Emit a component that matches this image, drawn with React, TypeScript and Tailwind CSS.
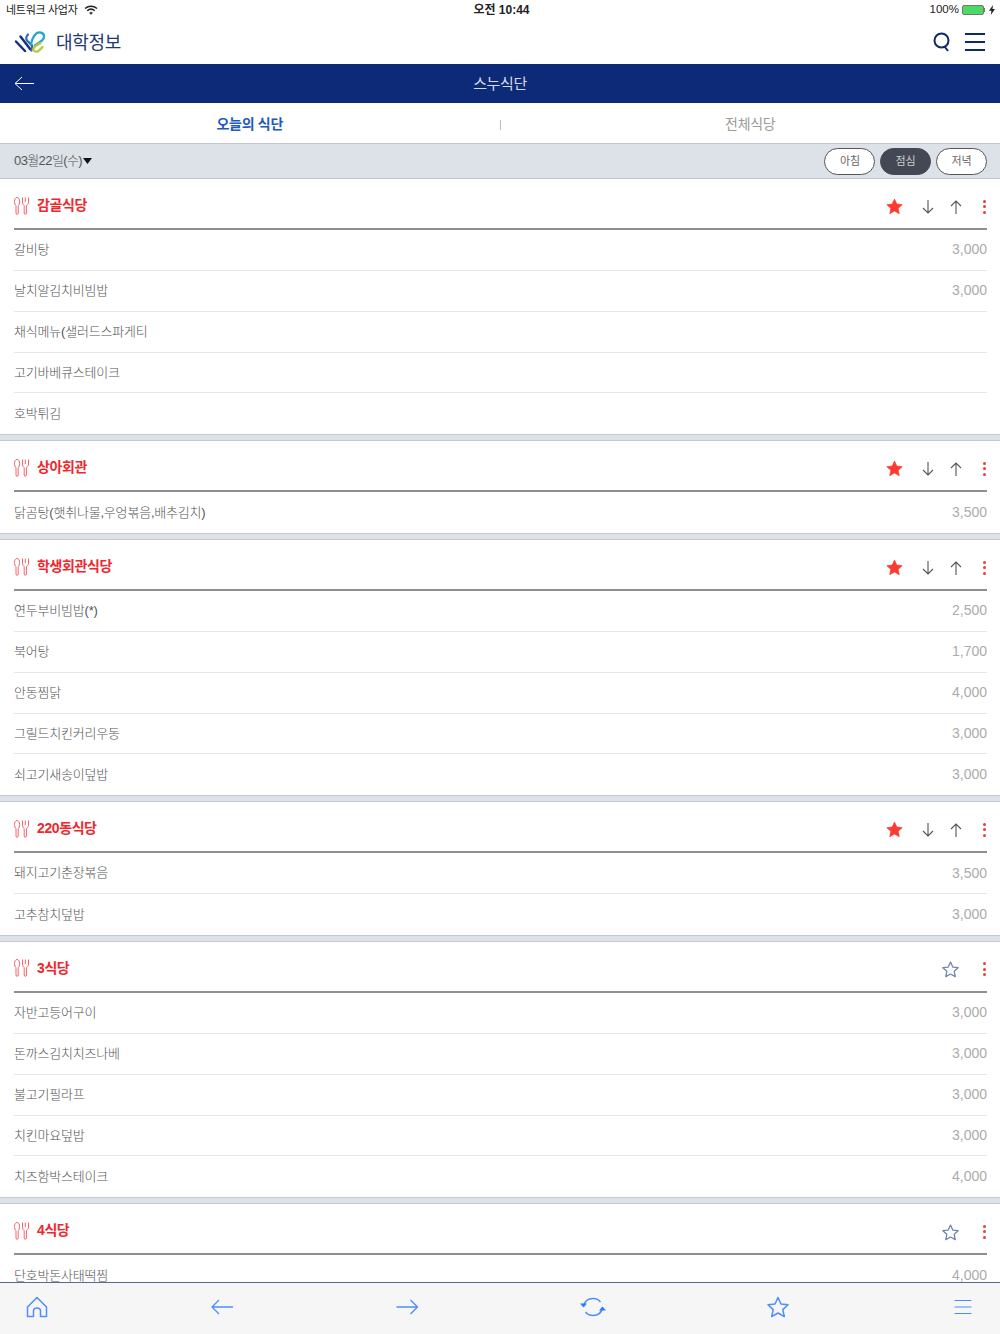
const font = "font-['Liberation_Sans','Noto_Sans_CJK_KR',sans-serif]";

type Menu = { name: string; price?: string };
type Cafeteria = { title: string; favorite: boolean; menus: Menu[] };

const cafeterias: Cafeteria[] = [
  {
    title: "감골식당",
    favorite: true,
    menus: [
      { name: "갈비탕", price: "3,000" },
      { name: "날치알김치비빔밥", price: "3,000" },
      { name: "채식메뉴(샐러드스파게티" },
      { name: "고기바베큐스테이크" },
      { name: "호박튀김" },
    ],
  },
  {
    title: "상아회관",
    favorite: true,
    menus: [{ name: "닭곰탕(햇취나물,우엉볶음,배추김치)", price: "3,500" }],
  },
  {
    title: "학생회관식당",
    favorite: true,
    menus: [
      { name: "연두부비빔밥(*)", price: "2,500" },
      { name: "북어탕", price: "1,700" },
      { name: "안동찜닭", price: "4,000" },
      { name: "그릴드치킨커리우동", price: "3,000" },
      { name: "쇠고기새송이덮밥", price: "3,000" },
    ],
  },
  {
    title: "220동식당",
    favorite: true,
    menus: [
      { name: "돼지고기춘장볶음", price: "3,500" },
      { name: "고추참치덮밥", price: "3,000" },
    ],
  },
  {
    title: "3식당",
    favorite: false,
    menus: [
      { name: "자반고등어구이", price: "3,000" },
      { name: "돈까스김치치즈나베", price: "3,000" },
      { name: "불고기필라프", price: "3,000" },
      { name: "치킨마요덮밥", price: "3,000" },
      { name: "치즈함박스테이크", price: "4,000" },
    ],
  },
  {
    title: "4식당",
    favorite: false,
    menus: [{ name: "단호박돈사태떡찜", price: "4,000" }],
  },
];

function Cutlery() {
  return (
    <svg width="15" height="18" viewBox="0 0 15 18" fill="none" stroke="#f4646a" strokeWidth="1">
      <path d="M3 .5C1.300 .5.500 2.500.500 4.500c0 2 .7 3.500 1.500 4V16c0 1.800 2.200 1.800 2.200 0V8.500c.8-.5 1.500-2 1.500-4C5.700 2.500 4.700 .5 3 .5Z" />
      <path d="M8.500.5V5c0 2 .8 3 1.700 3.500V16c0 1.800 2.200 1.800 2.200 0V8.500C13.300 8 14.500 7 14.500 5V.5M11.300.5V5" />
    </svg>
  );
}

function Star({ filled }: { filled: boolean }) {
  return (
    <svg width="17" height="17" viewBox="0 0 24 24" fill={filled ? "#fb3a32" : "none"} stroke={filled ? "#fb3a32" : "#6f86ab"} strokeWidth={filled ? 1 : 1.800} strokeLinejoin="round">
      <path d="m12 1.500 3.200 7 7.600.9-5.600 5.200 1.500 7.500-6.700-3.800-6.700 3.800 1.500-7.500L1.200 9.400l7.600-.9Z" />
    </svg>
  );
}

function Arrow({ up }: { up?: boolean }) {
  return (
    <svg width="12" height="14" viewBox="0 0 12 14" fill="none" stroke="#555" strokeWidth="1.100">
      {up ? <path d="M6 14V1M1 6l5-5 5 5" /> : <path d="M6 0v13M1 8l5 5 5-5" />}
    </svg>
  );
}

function Dots() {
  return (
    <div className="flex flex-col gap-[2.500px]">
      <span className="h-[3px] w-[3px] rounded-full bg-[#f53a32]" />
      <span className="h-[3px] w-[3px] rounded-full bg-[#f53a32]" />
      <span className="h-[3px] w-[3px] rounded-full bg-[#f53a32]" />
    </div>
  );
}

function Section({ item, last }: { item: Cafeteria; last: boolean }) {
  return (
    <section>
      <div className="ml-[14px] mr-[13px] flex h-[51px] items-center justify-between border-b-2 border-[#8f8f8f]">
        <div className="flex items-center gap-[8px] pt-[4px]">
          <Cutlery />
          <h3 className="text-[14px] font-bold tracking-[-0.4px] text-[#f0262d]">{item.title}</h3>
        </div>
        <div className="flex items-center pt-[6px]">
          {item.favorite ? (
            <div className="mr-[21px] flex items-center gap-[19px]">
              <Star filled />
              <div className="flex items-center gap-[16px]">
                <Arrow />
                <Arrow up />
              </div>
            </div>
          ) : (
            <div className="mr-[24px] pt-[1px]">
              <Star filled={false} />
            </div>
          )}
          <div className="mr-[1px]"><Dots /></div>
        </div>
      </div>
      {item.menus.map((m, i) => (
        <div
          key={m.name}
          className={`ml-[14px] mr-[13px] flex h-[40.850px] items-center justify-between ${i < item.menus.length - 1 ? "border-b border-[#e6e6e6]" : ""}`}
        >
          <span className="text-[13px] font-light tracking-[-0.2px] text-[#555]">{m.name}</span>
          {m.price && <span className="text-[14px] text-[#ababab]">{m.price}</span>}
        </div>
      ))}
      {!last && <div className="h-[7px] border-y border-[#c3cad4] bg-[#dde2e8]" />}
    </section>
  );
}

function FooterIcon({ children }: { children: React.ReactNode }) {
  return (
    <svg width="26" height="26" viewBox="0 0 26 26" fill="none" stroke="#4c8dff" strokeWidth="1.500" strokeLinejoin="round">
      {children}
    </svg>
  );
}

export default function App() {
  return (
    <div className={`flex h-[1334px] w-[1000px] flex-col overflow-hidden bg-white ${font}`}>
      <div className="flex h-[20px] shrink-0 items-center justify-between pl-[6px] pr-[5px] text-[11px] text-[#222]">
        <div className="flex w-[300px] items-center gap-[6px]">
          <span className="tracking-[-0.3px]">네트워크 사업자</span>
          <svg width="14" height="10" viewBox="0 0 14 10" fill="none" stroke="#222" strokeWidth="1.500">
            <path d="M1 3.500c3.500-3 8.500-3 12 0M3.200 5.800c2.300-2 5.300-2 7.600 0" />
            <path d="M5.500 7.800c1-.8 2-.8 3 0L7 9.500Z" fill="#222" strokeWidth="0.500" />
          </svg>
        </div>
        <span className="pl-[2px] text-[12px] font-bold">오전 10:44</span>
        <div className="flex w-[300px] items-center justify-end">
          <span className="mr-[3px] text-[11.500px]">100%</span>
          <div className="flex items-center">
            <div className="h-[10px] w-[22px] rounded-[2px] border border-[#777] bg-[#4cd964]" />
            <div className="h-[4px] w-[1px] bg-[#777]" />
          </div>
          <svg className="ml-[4px]" width="6" height="10" viewBox="0 0 6 10" fill="#222"><path d="M4 0 0 5.800h2.400L1.800 10 6 4H3.500Z" /></svg>
        </div>
      </div>

      <header className="flex h-[44px] shrink-0 items-center justify-between pl-[14px] pr-[15px]">
        <div className="flex items-center gap-[10px]">
          <svg width="32" height="24" viewBox="0 0 32 24" fill="none" strokeLinecap="round">
            <path d="M2 11.500 11 21M6.500 6.500l10 13" stroke="#1b2f86" strokeWidth="2.500" />
            <path d="M14 4.500c-3 3-2 6 1 8s4 5 2.500 8" stroke="#2f6cc0" strokeWidth="2.300" />
            <path d="M17 14c1-5 4-12 9-11.500s5 5 2 8l-7 5" stroke="#28a7c9" strokeWidth="2.300" />
            <path d="M26.500 13c-3 2-6 3-7 5.500s3 4 5 2.500 3-3 4-4" stroke="#b4cc3c" strokeWidth="2.300" />
          </svg>
          <span className="pt-[2px] text-[18px] tracking-[-0.3px] text-[#1e3a6e]">대학정보</span>
        </div>
        <div className="flex items-center gap-[14px]">
          <svg width="18" height="20" viewBox="0 0 18 20" fill="none" stroke="#0f2a68" strokeWidth="2">
            <circle cx="8.500" cy="8.500" r="7" />
            <path d="m11.500 14.500 3.500 4.500" />
          </svg>
          <div className="flex w-[20px] flex-col gap-[6px]">
            <span className="h-[2px] bg-[#0f2a68]" />
            <span className="h-[2px] bg-[#0f2a68]" />
            <span className="h-[2px] bg-[#0f2a68]" />
          </div>
        </div>
      </header>

      <div className="relative flex h-[39px] shrink-0 items-center justify-center bg-[#0d2a78] pt-[1px]">
        <svg className="absolute left-[14px] top-[12px]" width="20" height="15" viewBox="0 0 20 15" fill="none" stroke="#fff" strokeWidth="1">
          <path d="M20 7.500H1M8 1 1 7.500 8 14" />
        </svg>
        <h1 className="text-[15px] tracking-[-0.4px] text-[#d5dbe8]">스누식단</h1>
      </div>

      <nav className="flex h-[40px] shrink-0 items-center pt-[2px]">
        <div className="flex-1 text-center text-[14px] font-bold tracking-[-0.3px] text-[#2058c0]">오늘의 식단</div>
        <span className="mt-[2px] h-[10px] w-px bg-[#bbb]" />
        <div className="flex-1 text-center text-[14px] tracking-[-0.3px] text-[#9a9a9a]">전체식당</div>
      </nav>

      <div className="flex h-[36px] shrink-0 items-center justify-between border-y border-[#bfc6ce] bg-[#dde2e8] pl-[14px] pr-[13px]">
        <div className="flex items-center gap-[1px] text-[13px] font-light tracking-[-0.6px] text-[#555]">
          <span>03월22일(수)</span>
          <svg width="9" height="6" viewBox="0 0 9 6" fill="#111"><path d="M0 0h9L4.500 6Z" /></svg>
        </div>
        <div className="flex items-center gap-[5px]">
          <button className="h-[27px] w-[51px] rounded-full border border-[#555] bg-white pl-[1px] text-[11px] text-[#666]">아침</button>
          <button className="h-[27px] w-[51px] rounded-full border border-[#444854] bg-[#444854] text-[11px] text-[#ccc]">점심</button>
          <button className="h-[27px] w-[51px] rounded-full border border-[#555] bg-white text-[11px] text-[#666]">저녁</button>
        </div>
      </div>

      <main className="min-h-0 flex-1 overflow-hidden">
        {cafeterias.map((c, i) => (
          <Section key={c.title} item={c} last={i === cafeterias.length - 1} />
        ))}
      </main>

      <footer className="flex h-[52px] shrink-0 items-center justify-between border-t border-[#5b6a94] bg-[#f6f6f6] px-[24px] pb-[4px]">
        <FooterIcon>
          <path d="M3.500 13 13 3.500l9.500 9.500v9.500h-6v-5.500c0-4-7-4-7 0v5.500h-6Z" />
        </FooterIcon>
        <FooterIcon>
          <path d="M24 13H3M10 6l-7 7 7 7" strokeWidth="1.300" />
        </FooterIcon>
        <FooterIcon>
          <path d="M2.500 13h21M16.500 6l7 7-7 7" strokeWidth="1.300" />
        </FooterIcon>
        <FooterIcon>
          <path d="M3.500 12.500C4.500 7 8.500 4.500 13 4.500c3.500 0 6 1.500 7.500 3.500M22.500 13.500c-1 5.500-5 8-9.500 8-3.500 0-6-1.500-7.500-3.500" />
          <path d="m0 9.500 3.500 4 3.500-4ZM19 16.500l3.500-4 3.500 4Z" fill="#2f7bff" stroke="none" />
        </FooterIcon>
        <FooterIcon>
          <path d="m13 3.500 3 6.500 7 .8-5.200 4.800 1.500 7L13 19l-6.300 3.600 1.500-7L3 10.800l7-.8Z" />
        </FooterIcon>
        <FooterIcon>
          <path d="M4.500 6.500h17M4.500 13h17M4.500 19.500h17" strokeWidth="1.200" />
        </FooterIcon>
      </footer>
    </div>
  );
}
